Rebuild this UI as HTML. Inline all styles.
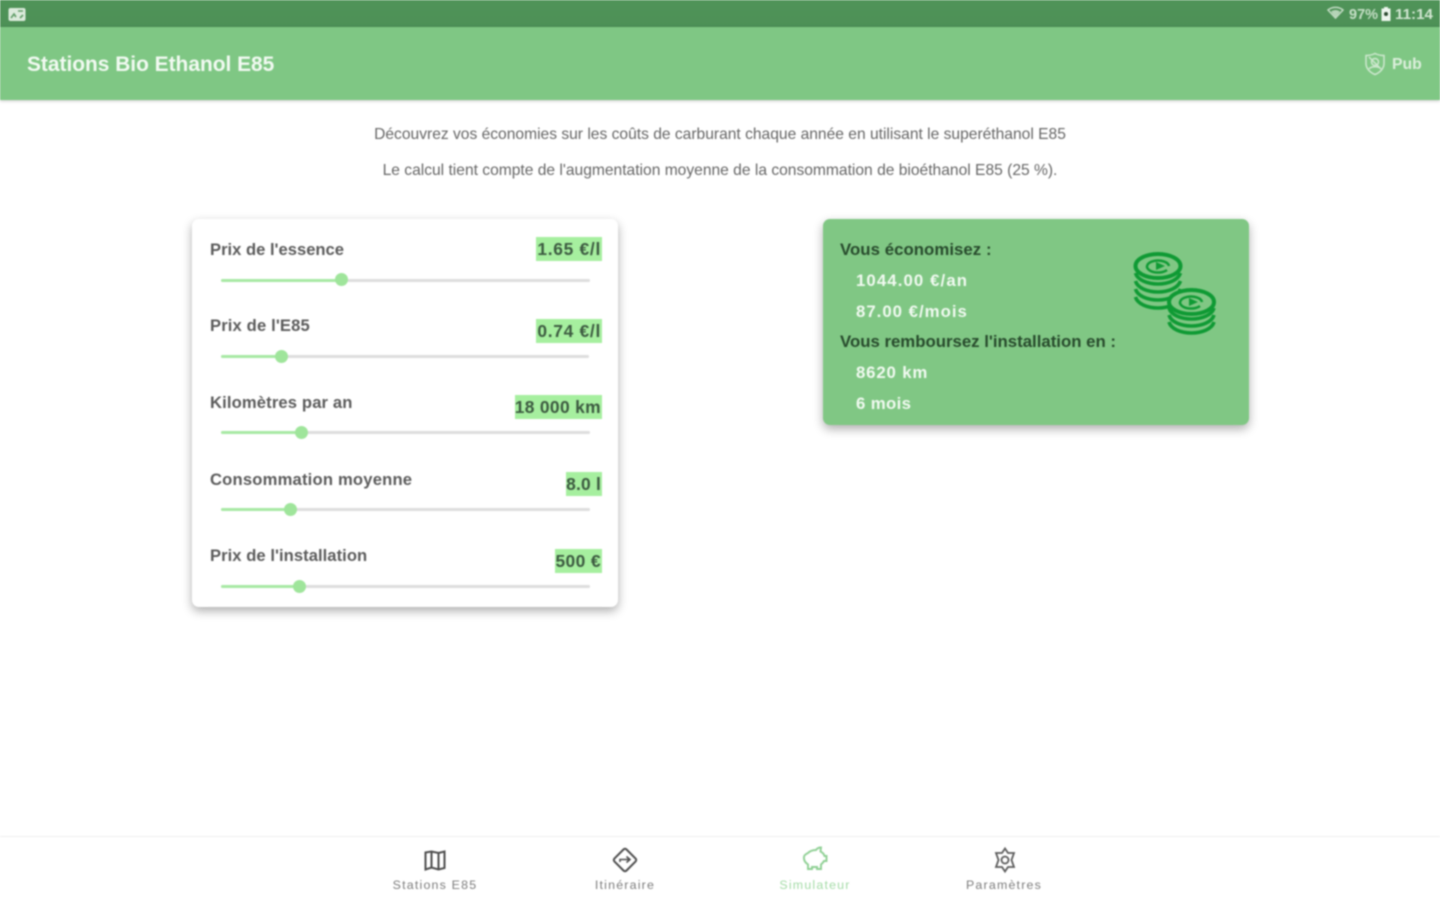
<!DOCTYPE html>
<html lang="fr">
<head>
<meta charset="utf-8">
<title>Stations Bio Ethanol E85</title>
<style>
html,body{margin:0;padding:0;background:#fff;}
body{width:1440px;height:900px;overflow:hidden;position:relative;font-family:"Liberation Sans",sans-serif;}
#page{position:absolute;inset:0;filter:blur(.7px);}
.a{position:absolute;white-space:nowrap;}
#status{left:0;top:0;width:1440px;height:27px;background:linear-gradient(#4f9358,#4d9056);}
#head{left:0;top:27px;width:1440px;height:72.500px;background:#7fc784;box-shadow:0 1px 3px rgba(0,0,0,.22);}
.title{left:27px;top:52px;font-size:20.900px;line-height:26px;font-weight:bold;color:#f2faf2;}
.intro{left:0;width:1440px;text-align:center;font-size:15.600px;line-height:18px;color:#666;}
.card{border-radius:7px;box-shadow:0 4px 10px rgba(0,0,0,.32);}
.lab{left:210px;font-size:16.600px;line-height:20px;color:#5b5b5b;font-weight:bold;letter-spacing:.14px;}
.val{right:838px;font-size:17.400px;line-height:24px;height:24px;background:#a6ef9f;color:#3c5a40;font-weight:bold;padding:0 1px 0 0;}
.track{height:3px;background:#dedede;border-radius:2px;}
.fill{height:3px;background:#a8e9a4;border-radius:2px;}
.thumb{width:13px;height:13px;background:#9fe59b;border-radius:50%;}
.r{font-size:16.800px;line-height:20px;font-weight:bold;}
.dk{color:#274a2c;left:840px;}
.wh{color:#f1faf1;left:856px;}
.tab{width:160px;text-align:center;font-size:12.400px;letter-spacing:1.200px;line-height:16px;color:#7c7c7c;top:877px;}
</style>
</head>
<body>
<div id="page">
<div class="a" id="status"></div>
<svg class="a" style="left:8px;top:7px" width="18" height="15" viewBox="0 0 18 15"><rect x=".5" y="1" width="17" height="13" rx="2" fill="#dcebdc"/><path d="M3 11l3-4 2 3M10 4h5M12 11l3-3" stroke="#5f9c66" stroke-width="1.600" fill="none"/></svg>
<svg class="a" style="left:1327px;top:6px" width="18" height="15" viewBox="0 0 18 15"><path d="M1 4c4-3.500 11-3.500 15 0l-7.500 8z" fill="none" stroke="#c4dcc5" stroke-width="1.500"/><path d="M4 5.500c3-2 6-2 9 0l-4.500 6z" fill="#b5d4b7"/></svg>
<div class="a" style="left:1349px;top:6px;font-size:14.500px;line-height:18px;color:#c5dfc6;font-weight:bold">97%</div>
<svg class="a" style="left:1381px;top:7px" width="10" height="14" viewBox="0 0 10 14"><path d="M3 0h4v1.500h2.500V14H.5V1.500H3z" fill="#eef6ee"/><circle cx="5" cy="7" r="2" fill="#2c4a30"/></svg>
<div class="a" style="left:1395px;top:6px;font-size:15.200px;line-height:18px;color:#d2e6d2;font-weight:bold">11:14</div>

<div class="a" id="head"></div>
<div class="a title">Stations Bio Ethanol E85</div>
<svg class="a" style="left:1364px;top:52px" width="22" height="24" viewBox="0 0 22 24" fill="none" stroke="#cfe8d0" stroke-width="1.500"><path d="M11 1.500c3 1.500 6 2 9 2v8c0 5-4 9-9 11-5-2-9-6-9-11v-8c3 0 6-.5 9-2z"/><circle cx="11" cy="10" r="3.500"/><path d="M5 17c2-3 10-3 12 0M5 5l12 12"/></svg>
<div class="a" style="left:1392px;top:55px;font-size:15.800px;line-height:20px;color:#dcefdc;font-weight:bold">Pub</div>

<div class="a intro" style="top:126px;left:0">Découvrez vos économies sur les coûts de carburant chaque année en utilisant le superéthanol E85</div>
<div class="a intro" style="top:162px;left:0">Le calcul tient compte de l'augmentation moyenne de la consommation de bioéthanol E85 (25 %).</div>

<div class="a card" style="left:192px;top:219px;width:426px;height:388px;background:#fff"></div>

<div class="a lab" style="top:240px;letter-spacing:0">Prix de l'essence</div>
<div class="a val" style="top:237px;letter-spacing:.7px;padding-left:1px">1.65 €/l</div>
<div class="a track" style="left:221px;top:278.500px;width:369px"></div>
<div class="a fill" style="left:221px;top:278.500px;width:120px"></div>
<div class="a thumb" style="left:335px;top:273px"></div>

<div class="a lab" style="top:316px">Prix de l'E85</div>
<div class="a val" style="top:319px;letter-spacing:.7px;padding-left:1px">0.74 €/l</div>
<div class="a track" style="left:221px;top:354.500px;width:368px"></div>
<div class="a fill" style="left:221px;top:354.500px;width:60px"></div>
<div class="a thumb" style="left:275px;top:349.500px"></div>

<div class="a lab" style="top:393px">Kilomètres par an</div>
<div class="a val" style="top:395px;letter-spacing:.35px">18 000 km</div>
<div class="a track" style="left:221px;top:431px;width:369px"></div>
<div class="a fill" style="left:221px;top:431px;width:80px"></div>
<div class="a thumb" style="left:294.500px;top:426px"></div>

<div class="a lab" style="top:470px;letter-spacing:.2px">Consommation moyenne</div>
<div class="a val" style="top:472px;letter-spacing:.2px">8.0 l</div>
<div class="a track" style="left:221px;top:507.500px;width:369px"></div>
<div class="a fill" style="left:221px;top:507.500px;width:70px"></div>
<div class="a thumb" style="left:284px;top:502.500px"></div>

<div class="a lab" style="top:546px;letter-spacing:.05px">Prix de l'installation</div>
<div class="a val" style="top:549px;letter-spacing:.4px">500 €</div>
<div class="a track" style="left:221px;top:584.500px;width:369px"></div>
<div class="a fill" style="left:221px;top:584.500px;width:78px"></div>
<div class="a thumb" style="left:293px;top:579.500px"></div>

<div class="a card" style="left:823px;top:219px;width:426px;height:206px;background:#80c784"></div>
<div class="a r dk" style="top:240px;letter-spacing:.05px">Vous économisez :</div>
<div class="a r wh" style="top:271px;letter-spacing:1.100px">1044.00 €/an</div>
<div class="a r wh" style="top:302px;letter-spacing:1px">87.00 €/mois</div>
<div class="a r dk" style="top:332px">Vous remboursez l'installation en :</div>
<div class="a r wh" style="top:363px;letter-spacing:.85px">8620 km</div>
<div class="a r wh" style="top:394px;letter-spacing:.35px">6 mois</div>

<svg class="a" style="left:1130px;top:248px" width="90" height="90" viewBox="0 0 90 90" fill="none" stroke="#0f9a34" stroke-width="3.600">
<ellipse cx="28" cy="18" rx="22.500" ry="12" stroke-width="4"/>
<path d="M5.500 25c2 7 12 11 22.500 11s20-4 22.500-11M5.500 33c2 7 12 11 22.500 11s20-4 22.500-11M5.500 41c2 7 12 11 22.500 11s20-4 22.500-11M5.500 49c2 7 12 11 22.500 11s20-4 22.500-11"/>
<path d="M39 18a11 6 0 1 0-2 4" stroke-width="2.500"/>
<path d="M26 14l9 4-9 4z" fill="#0f9a34" stroke="none"/>
<ellipse cx="61.500" cy="54" rx="22.500" ry="12" fill="#80c784" stroke-width="4"/>
<path d="M39 60c2 7 12 11 22.500 11S82 67 84 60M39 67c2 7 12 11 22.500 11S82 74 84 67M39 74c2 7 12 11 22.500 11S82 81 84 74"/>
<path d="M72 54a11 6 0 1 0-2 4" stroke-width="2.500"/>
<path d="M59 50l9 4-9 4z" fill="#0f9a34" stroke="none"/>
</svg>

<div class="a" style="left:0;top:836px;width:1440px;height:1px;background:#efefef"></div>

<svg class="a" style="left:423px;top:848px" width="24" height="24" viewBox="0 0 24 24" fill="none" stroke="#4d4d4d" stroke-width="2"><path d="M2.500 4.500l6-1 7 1.500 6-1.500V20l-6 1.500-7-2-6 2zM8.500 3.500V19.500M15.500 5V21.500"/></svg>
<div class="a tab" style="left:355px">Stations E85</div>

<svg class="a" style="left:611px;top:846px" width="28" height="28" viewBox="0 0 28 28" fill="none" stroke="#4d4d4d" stroke-width="2"><rect x="5.500" y="5.500" width="17" height="17" rx="2" transform="rotate(45 14 14)"/><path d="M9 16v-2.500h9M15.500 10.500L19 13.500l-3.500 3" stroke-width="1.600"/></svg>
<div class="a tab" style="left:545px">Itinéraire</div>

<svg class="a" style="left:801px;top:846px" width="28" height="26" viewBox="0 0 28 26" fill="none" stroke="#8fd094" stroke-width="1.900"><path d="M7 7c2-2 5-3 8-3 1-1.500 3-2.500 5-2.500l-.5 4c2 1 3.500 2.500 4 4.500h2v5h-2.500c-.8 1.500-2 2.700-3 3.500V23h-4v-2h-5v2H7v-4.500C4 16.500 2.500 13.500 3 10.500 3.300 9 5 8 7 7z"/></svg>
<div class="a tab" style="left:735px;color:#a3dba6">Simulateur</div>

<svg class="a" style="left:991px;top:846px" width="28" height="28" viewBox="0 0 28 28" fill="none" stroke="#5c5c5c" stroke-width="1.800"><path d="M14 2.500l3 4.500h6l-2.500 7 2.500 7h-6l-3 4.500-3-4.500H5l2.500-7L5 7h6z"/><circle cx="14" cy="14" r="3.500"/></svg>
<div class="a tab" style="left:924px">Paramètres</div>
</div>
</body>
</html>
